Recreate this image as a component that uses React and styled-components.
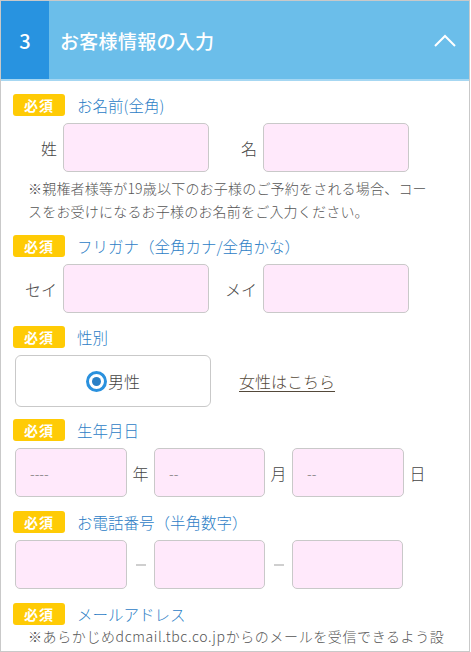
import styled, { createGlobalStyle } from "styled-components";

const GlobalStyle = createGlobalStyle`
  html, body {
    margin: 0;
    padding: 0;
    background: #fff;
  }
  body {
    font-family: "Noto Sans CJK JP", "Noto Sans", sans-serif;
    font-weight: 300;
    color: #444;
  }
  * {
    box-sizing: border-box;
  }
`;

const Frame = styled.div`
  width: 470px;
  height: 652px;
  border: 1px solid #c9c9c9;
  overflow: hidden;
  background: #fff;
`;

const Header = styled.div`
  display: flex;
  align-items: center;
  height: 80px;
  background: #6bbeea;
  border-bottom: 2px solid #a6d7f2;
`;

const StepNumber = styled.div`
  width: 48px;
  height: 100%;
  background: #2893e0;
  color: #fff;
  font-size: 20px;
  font-weight: 500;
  display: flex;
  align-items: center;
  justify-content: center;
`;

const Title = styled.h2`
  margin: 0 0 0 11px;
  font-size: 19px;
  font-weight: 500;
  color: #fff;
  letter-spacing: 0.3px;
`;

const Toggle = styled.button`
  margin-left: auto;
  margin-right: 13px;
  border: none;
  background: none;
  padding: 0;
  display: flex;
  cursor: pointer;
`;

const Body = styled.div`
  padding: 13px 12px 0;
`;

const Section = styled.section`
  margin-top: ${(p) => p.$top || 0}px;
`;

const LabelRow = styled.div`
  display: flex;
  align-items: center;
  gap: 12px;
  height: 22px;
`;

const Badge = styled.span`
  width: 52px;
  height: 22px;
  border-radius: 3px;
  background: #ffcb05;
  color: #fff;
  font-size: 14px;
  font-weight: 700;
  display: flex;
  align-items: center;
  justify-content: center;
  letter-spacing: 1px;
`;

const LabelText = styled.span`
  font-size: 15.5px;
  color: #2d80c6;
`;

const FieldRow = styled.div`
  display: flex;
  align-items: center;
  margin-top: 7px;
  padding-left: ${(p) => p.$indent || 0}px;
`;

const Pair = styled.div`
  display: flex;
  align-items: center;
  & + & {
    margin-left: 4px;
  }
`;

const FieldLabel = styled.span`
  width: 50px;
  padding-right: 6px;
  text-align: right;
  font-size: 16px;
  color: #444;
`;

const Input = styled.input`
  width: ${(p) => p.$w || 146}px;
  height: 49px;
  border: 1px solid #c9c9c9;
  border-radius: 5px;
  background: #ffe9fb;
  padding: 0 14px;
  font-family: inherit;
  font-weight: 300;
  font-size: 14px;
  color: #444;
  outline: none;
  &::placeholder {
    color: #777;
  }
`;

const Unit = styled.span`
  width: 27px;
  text-align: center;
  font-size: 16px;
  color: #444;
`;

const Dash = styled.span`
  width: 27px;
  display: flex;
  justify-content: center;
  &::before {
    content: "";
    width: 10px;
    height: 2px;
    background: #cfcfcf;
  }
`;

const Note = styled.p`
  margin: ${(p) => p.$top || 0}px 0 0 15px;
  width: ${(p) => p.$w || 402}px;
  font-size: 14px;
  line-height: 23px;
  color: #555;
  letter-spacing: ${(p) => p.$ls || 0.2}px;
`;

const GenderBox = styled.label`
  width: 196px;
  height: 52px;
  border: 1px solid #c9c9c9;
  border-radius: 6px;
  display: flex;
  align-items: center;
  justify-content: center;
  font-size: 16px;
  color: #444;
  cursor: pointer;
`;

const Radio = styled.span`
  width: 21px;
  height: 21px;
  border-radius: 50%;
  border: 3px solid #2a91de;
  display: flex;
  align-items: center;
  justify-content: center;
  margin-right: 1px;
  &::after {
    content: "";
    width: 9px;
    height: 9px;
    border-radius: 50%;
    background: #2a80c6;
  }
`;

const Link = styled.a`
  margin-left: 28px;
  font-size: 16px;
  color: #54493a;
  text-decoration: underline;
  text-underline-offset: 3px;
`;

function Label({ children }) {
  return (
    <LabelRow>
      <Badge>必須</Badge>
      <LabelText>{children}</LabelText>
    </LabelRow>
  );
}

export default function App() {
  return (
    <>
      <GlobalStyle />
      <Frame>
        <Header>
          <StepNumber>3</StepNumber>
          <Title>お客様情報の入力</Title>
          <Toggle aria-label="閉じる">
            <svg width="22" height="13" viewBox="0 0 22 13">
              <polyline
                points="1,12 11,2 21,12"
                fill="none"
                stroke="#fff"
                strokeWidth="2"
              />
            </svg>
          </Toggle>
        </Header>
        <Body>
          <Section>
            <Label>お名前(全角)</Label>
            <FieldRow>
              <Pair>
                <FieldLabel>姓</FieldLabel>
                <Input />
              </Pair>
              <Pair>
                <FieldLabel>名</FieldLabel>
                <Input />
              </Pair>
            </FieldRow>
            <Note $top={5}>
              ※親権者様等が19歳以下のお子様のご予約をされる場合、コースをお受けになるお子様のお名前をご入力ください。
            </Note>
          </Section>

          <Section $top={12}>
            <Label>フリガナ（全角カナ/全角かな）</Label>
            <FieldRow>
              <Pair>
                <FieldLabel>セイ</FieldLabel>
                <Input />
              </Pair>
              <Pair>
                <FieldLabel>メイ</FieldLabel>
                <Input />
              </Pair>
            </FieldRow>
          </Section>

          <Section $top={13}>
            <Label>性別</Label>
            <FieldRow $indent={2}>
              <GenderBox>
                <Radio />
                男性
              </GenderBox>
              <Link href="#">女性はこちら</Link>
            </FieldRow>
          </Section>

          <Section $top={12}>
            <Label>生年月日</Label>
            <FieldRow $indent={2}>
              <Input $w={112} placeholder="----" />
              <Unit>年</Unit>
              <Input $w={111} placeholder="--" />
              <Unit>月</Unit>
              <Input $w={112} placeholder="--" />
              <Unit>日</Unit>
            </FieldRow>
          </Section>

          <Section $top={14}>
            <Label>お電話番号（半角数字）</Label>
            <FieldRow $indent={2}>
              <Input $w={112} />
              <Dash />
              <Input $w={111} />
              <Dash />
              <Input $w={111} />
            </FieldRow>
          </Section>

          <Section $top={14}>
            <Label>メールアドレス</Label>
            <Note $top={0} $w={420} $ls={0.6}>
              ※あらかじめdcmail.tbc.co.jpからのメールを受信できるよう設定してください。
            </Note>
          </Section>
        </Body>
      </Frame>
    </>
  );
}
